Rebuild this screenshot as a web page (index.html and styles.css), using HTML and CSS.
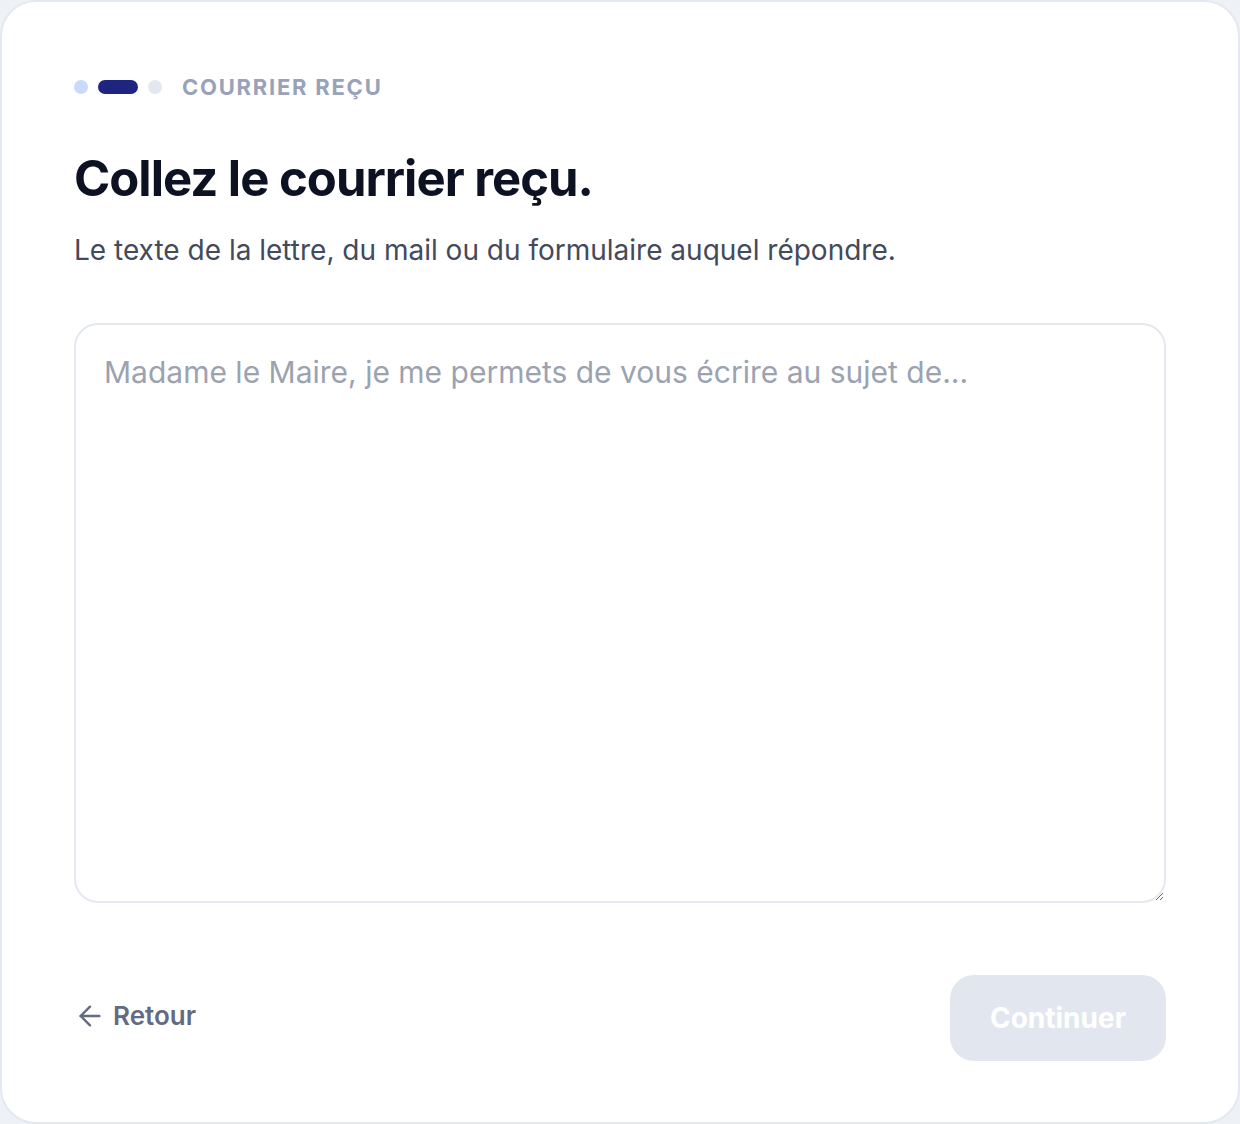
FILE: index.html
```html
<!DOCTYPE html>
<html lang="fr">
<head>
<meta charset="utf-8">
<title>Courrier reçu</title>
<link rel="stylesheet" href="styles.css">
</head>
<body>
<main class="card">
  <div class="steps">
    <span class="dot dot-done"></span>
    <span class="dot dot-active"></span>
    <span class="dot dot-todo"></span>
    <span class="step-label">Courrier reçu</span>
  </div>
  <h1 class="title">Collez le courrier reçu.</h1>
  <p class="subtitle">Le texte de la lettre, du mail ou du formulaire auquel répondre.</p>
  <textarea class="letter" placeholder="Madame le Maire, je me permets de vous écrire au sujet de..."></textarea>
  <div class="actions">
    <button class="back" type="button">
      <svg class="back-icon" viewBox="0 0 24 24" width="32" height="32" fill="none" stroke="currentColor" stroke-width="1.8" stroke-linecap="round" stroke-linejoin="round"><path d="M19 12H5"/><path d="M12 19l-7-7 7-7"/></svg>
      <span>Retour</span>
    </button>
    <button class="next" type="button" disabled>Continuer</button>
  </div>
</main>
</body>
</html>
```
FILE: styles.css
```css
* { box-sizing: border-box; }
html, body { margin: 0; padding: 0; }
body {
  background: #eef2f7;
  font-family: Inter, "Noto Sans", sans-serif;
  width: 1240px;
  height: 1124px;
}
.card {
  width: 1240px;
  height: 1124px;
  background: #ffffff;
  border: 2px solid #e4e8f0;
  border-radius: 36px;
  padding: 73px 72px 60px 72px;
  display: flex;
  flex-direction: column;
}
.steps {
  display: flex;
  align-items: center;
  gap: 10px;
  height: 24px;
}
.dot {
  display: block;
  height: 14px;
  width: 14px;
  border-radius: 7px;
}
.dot-done { background: #c9dbfb; }
.dot-active { background: #1e2580; width: 40px; }
.dot-todo { background: #e3e8f0; }
.step-label {
  margin-left: 10px;
  font-size: 22px;
  font-weight: 700;
  letter-spacing: 0.08em;
  text-transform: uppercase;
  color: #98a2b8;
}
.title {
  margin: 50px 0 0 0;
  font-size: 49px;
  line-height: 60px;
  font-weight: 700;
  letter-spacing: -0.02em;
  color: #0d1222;
}
.subtitle {
  margin: 22px 0 0 0;
  font-size: 28px;
  line-height: 38px;
  color: #434a5c;
}
.letter {
  margin-top: 54px;
  width: 100%;
  height: 580px;
  flex: none;
  border: 2px solid #e4e8f0;
  border-radius: 24px;
  padding: 27px 28px;
  font-family: Inter, "Noto Sans", sans-serif;
  font-size: 30px;
  line-height: 40px;
  color: #0d1222;
  background: #fff;
  outline: none;
}
.letter::placeholder { color: #9ba2b0; }
.actions {
  margin-top: 72px;
  display: flex;
  align-items: center;
  justify-content: space-between;
}
.back {
  display: flex;
  align-items: center;
  gap: 7px;
  background: none;
  border: none;
  padding: 0 0 5px 0;
  font-family: Inter, "Noto Sans", sans-serif;
  font-size: 26px;
  font-weight: 600;
  color: #636b80;
  cursor: pointer;
}
.back-icon { width: 32px; height: 32px; display: block; }
.next {
  width: 216px;
  height: 86px;
  border: none;
  border-radius: 24px;
  background: #e2e7ef;
  color: #ffffff;
  font-family: Inter, "Noto Sans", sans-serif;
  font-size: 28px;
  font-weight: 700;
}
```
